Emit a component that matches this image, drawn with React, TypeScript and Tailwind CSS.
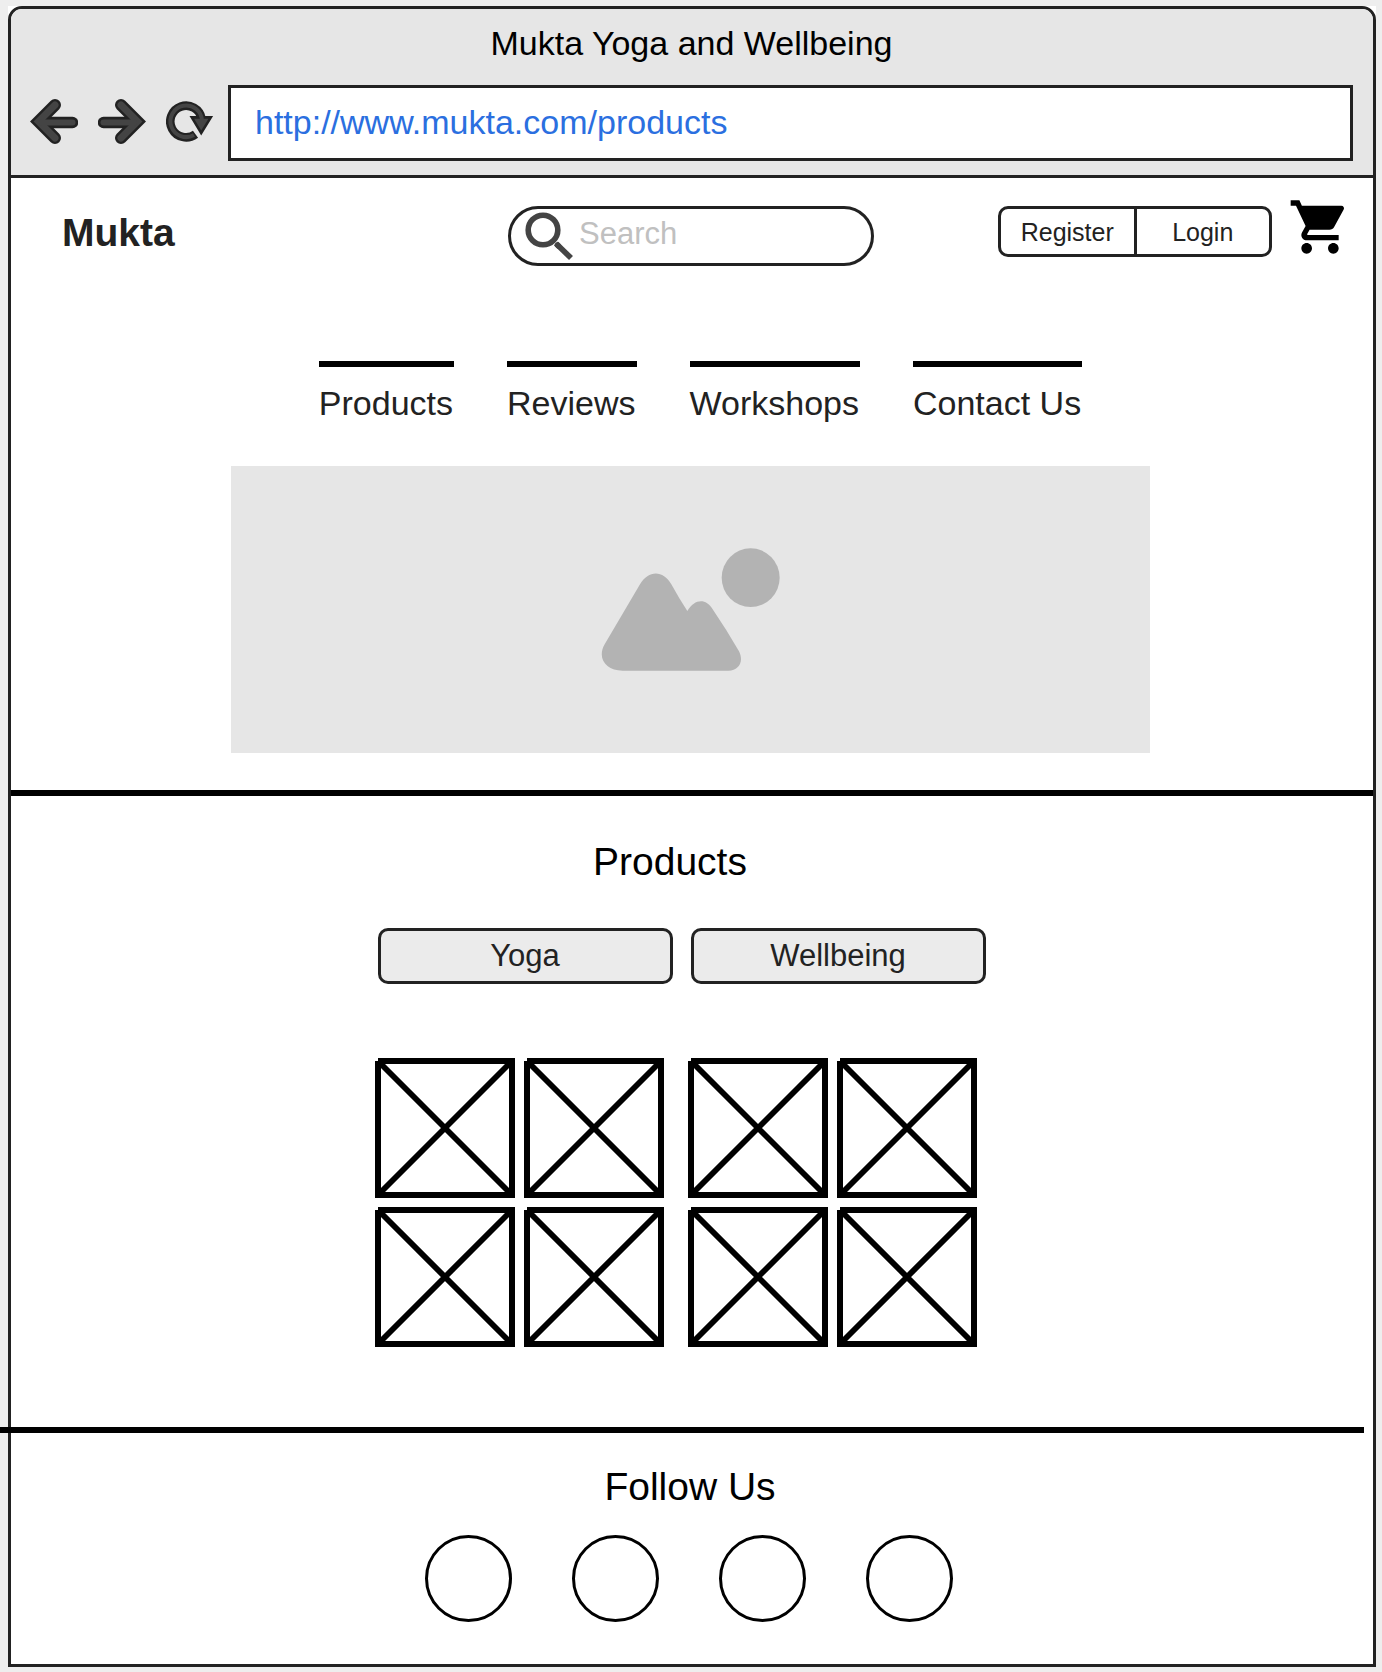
import React from "react";
import { MdShoppingCart } from "react-icons/md";

const NAV_LINKS = ["Products", "Reviews", "Workshops", "Contact Us"];
const CATEGORIES = ["Yoga", "Wellbeing"];
const SOCIAL_LINKS = ["Facebook", "Instagram", "Twitter", "YouTube"];

function ArrowIcon({ flipped = false }: { flipped?: boolean }) {
  const head = "M25 6 L8.5 22.5 L25 39";
  const shaft = "M12 23.5 H42.5";
  return (
    <svg viewBox="0 0 48 48" className="size-12" fill="none" strokeLinecap="round" aria-hidden="true">
      <g transform={flipped ? "matrix(-1 0 0 1 48 0)" : undefined}>
        <path d={head} stroke="#222" strokeWidth="12" />
        <path d={shaft} stroke="#222" strokeWidth="11.5" />
        <path d={head} stroke="#444" strokeWidth="7" />
        <path d={shaft} stroke="#444" strokeWidth="6" />
      </g>
    </svg>
  );
}

function ReloadIcon() {
  return (
    <svg viewBox="0 0 48 48" className="size-12" fill="none" aria-hidden="true">
      <path d="M29.5 35.2 A15.8 15.8 0 1 1 35.6 19.5" stroke="#222" strokeWidth="8.6" />
      <path d="M25.8 18.4 H44.8 L35.2 34 Z" fill="#444" stroke="#222" strokeWidth="2.6" />
      <path d="M28 36 A15.8 15.8 0 1 1 36 22" stroke="#444" strokeWidth="4" />
    </svg>
  );
}

function SearchIcon() {
  return (
    <svg viewBox="0 0 48 48" className="size-12 shrink-0" fill="none" stroke="#444" aria-hidden="true">
      <circle cx="18" cy="18" r="14.8" strokeWidth="5.6" />
      <path d="M31 31.5 L46 46" strokeWidth="5.6" />
      <path d="M32.5 33 L33.5 34" strokeWidth="5.6" strokeLinecap="round" />
    </svg>
  );
}

function LandscapeIcon() {
  return (
    <svg viewBox="123 83 537 369" className="h-[123px] w-[179px]" fill="#b3b3b3" aria-hidden="true">
      <path d="M188 451 C138 451 110 414 134 372 L240 192 C266 149 309 149 334 192 Q358 236 382 272 C404 234 438 234 457 265 Q500 328 537 393 C553 425 535 451 506 451 Z" />
      <ellipse cx="572" cy="172" rx="87" ry="88" />
    </svg>
  );
}

function CrossedBox() {
  return (
    <svg viewBox="0 0 140 140" className="size-[140px]" fill="none" stroke="#000" aria-hidden="true">
      <path d="M3 3 H137 V137 H3 V3" strokeWidth="6" />
      <path d="M3 3 L137 137 M137 3 L3 137" strokeWidth="5.8" />
    </svg>
  );
}

function ProductGroup() {
  return (
    <div className="grid grid-cols-2 gap-[9px]">
      {[0, 1, 2, 3].map((item) => (
        <CrossedBox key={item} />
      ))}
    </div>
  );
}

export default function App() {
  return (
    <div className="min-h-screen bg-[#eee] pt-[6px] pr-[6px] pb-[5px] pl-2 font-['Liberation_Sans',Arial,sans-serif]">
      <div className="bg-white">
        <div className="rounded-t-[14px] border-[3px] border-[#222] bg-white">
          <header className="rounded-t-[11px] border-b-[3px] border-[#222] bg-[#e6e6e6] pt-[14px] pr-5 pb-[14px] pl-[19px]">
            <p className="text-center text-[34px] leading-10 text-black">Mukta Yoga and Wellbeing</p>
            <div className="mt-[22px] flex items-center gap-[14px]">
              <div className="flex gap-5">
                <button type="button" aria-label="Back">
                  <ArrowIcon />
                </button>
                <button type="button" aria-label="Forward">
                  <ArrowIcon flipped />
                </button>
                <button type="button" aria-label="Reload">
                  <ReloadIcon />
                </button>
              </div>
              <input
                type="text"
                aria-label="Address"
                defaultValue="http://www.mukta.com/products"
                className="h-[76px] min-w-0 flex-1 border-[3px] border-[#222] bg-white px-6 pb-[2px] text-[34px] text-[#2b6fe0] outline-none"
              />
            </div>
          </header>

          <main>
            <div className="grid grid-cols-[1fr_366px_1fr] items-start pt-[17px] pr-[21px] pl-[19px]">
              <a href="#" className="mt-4 pl-8 text-[39px] leading-[44px] font-bold text-[#222]">
                Mukta
              </a>
              <label className="mt-[11px] flex h-[60px] items-center gap-[6px] rounded-full border-[3px] border-[#222] bg-white pr-6 pl-[14px]">
                <SearchIcon />
                <input
                  type="search"
                  aria-label="Search"
                  placeholder="Search"
                  className="h-11 min-w-0 flex-1 pb-1 text-[31px] text-[#222] outline-none placeholder:text-[#c0c0c0]"
                />
              </label>
              <div className="flex items-start justify-end gap-4">
                <div className="mt-[11px] flex h-[51px] w-[274px] divide-x-[3px] divide-[#222] rounded-[10px] border-[3px] border-[#222] text-[25px] text-[#222]">
                  <button type="button" className="flex-1 pt-[2px]">
                    Register
                  </button>
                  <button type="button" className="flex-1 pt-[2px]">
                    Login
                  </button>
                </div>
                <button type="button" aria-label="Cart">
                  <MdShoppingCart className="size-16 text-black" />
                </button>
              </div>
            </div>

            <nav className="mt-[95px] flex justify-center gap-[53px] pl-[17px]">
              {NAV_LINKS.map((link) => (
                <a
                  key={link}
                  href="#"
                  className="border-t-[6px] border-black pt-4 pr-px text-[34px] leading-10 text-[#222]"
                >
                  {link}
                </a>
              ))}
            </nav>

            <div className="mt-[43px] flex justify-center pr-[3px]">
              <div className="flex h-[287px] w-[919px] items-center justify-center bg-[#e6e6e6]">
                <LandscapeIcon />
              </div>
            </div>

            <hr className="mt-[37px] border-t-[6px] border-black" />

            <section>
              <h1 className="mt-11 pr-11 text-center text-[39px] leading-[44px] text-black">Products</h1>
              <div className="mt-11 flex justify-center gap-[18px] pr-[21px]">
                {CATEGORIES.map((category) => (
                  <button
                    key={category}
                    type="button"
                    className="h-14 w-[295px] rounded-[10px] border-[3px] border-[#222] bg-[#ebebeb] text-[31px] leading-10 text-[#222]"
                  >
                    {category}
                  </button>
                ))}
              </div>
              <div className="mt-[74px] flex justify-center gap-6 pr-[33px]">
                <ProductGroup />
                <ProductGroup />
              </div>
            </section>

            <hr className="relative mt-20 mr-[9px] -ml-[11px] border-t-[6px] border-black" />
          </main>

          <footer className="pb-[42px]">
            <h2 className="mt-8 pr-1 text-center text-[39px] leading-[44px] text-black">Follow Us</h2>
            <div className="mt-[26px] flex justify-center gap-[60px] pr-[6px]">
              {SOCIAL_LINKS.map((name) => (
                <a
                  key={name}
                  href="#"
                  aria-label={name}
                  className="size-[87px] rounded-full border-[3px] border-black"
                />
              ))}
            </div>
          </footer>
        </div>
      </div>
    </div>
  );
}
